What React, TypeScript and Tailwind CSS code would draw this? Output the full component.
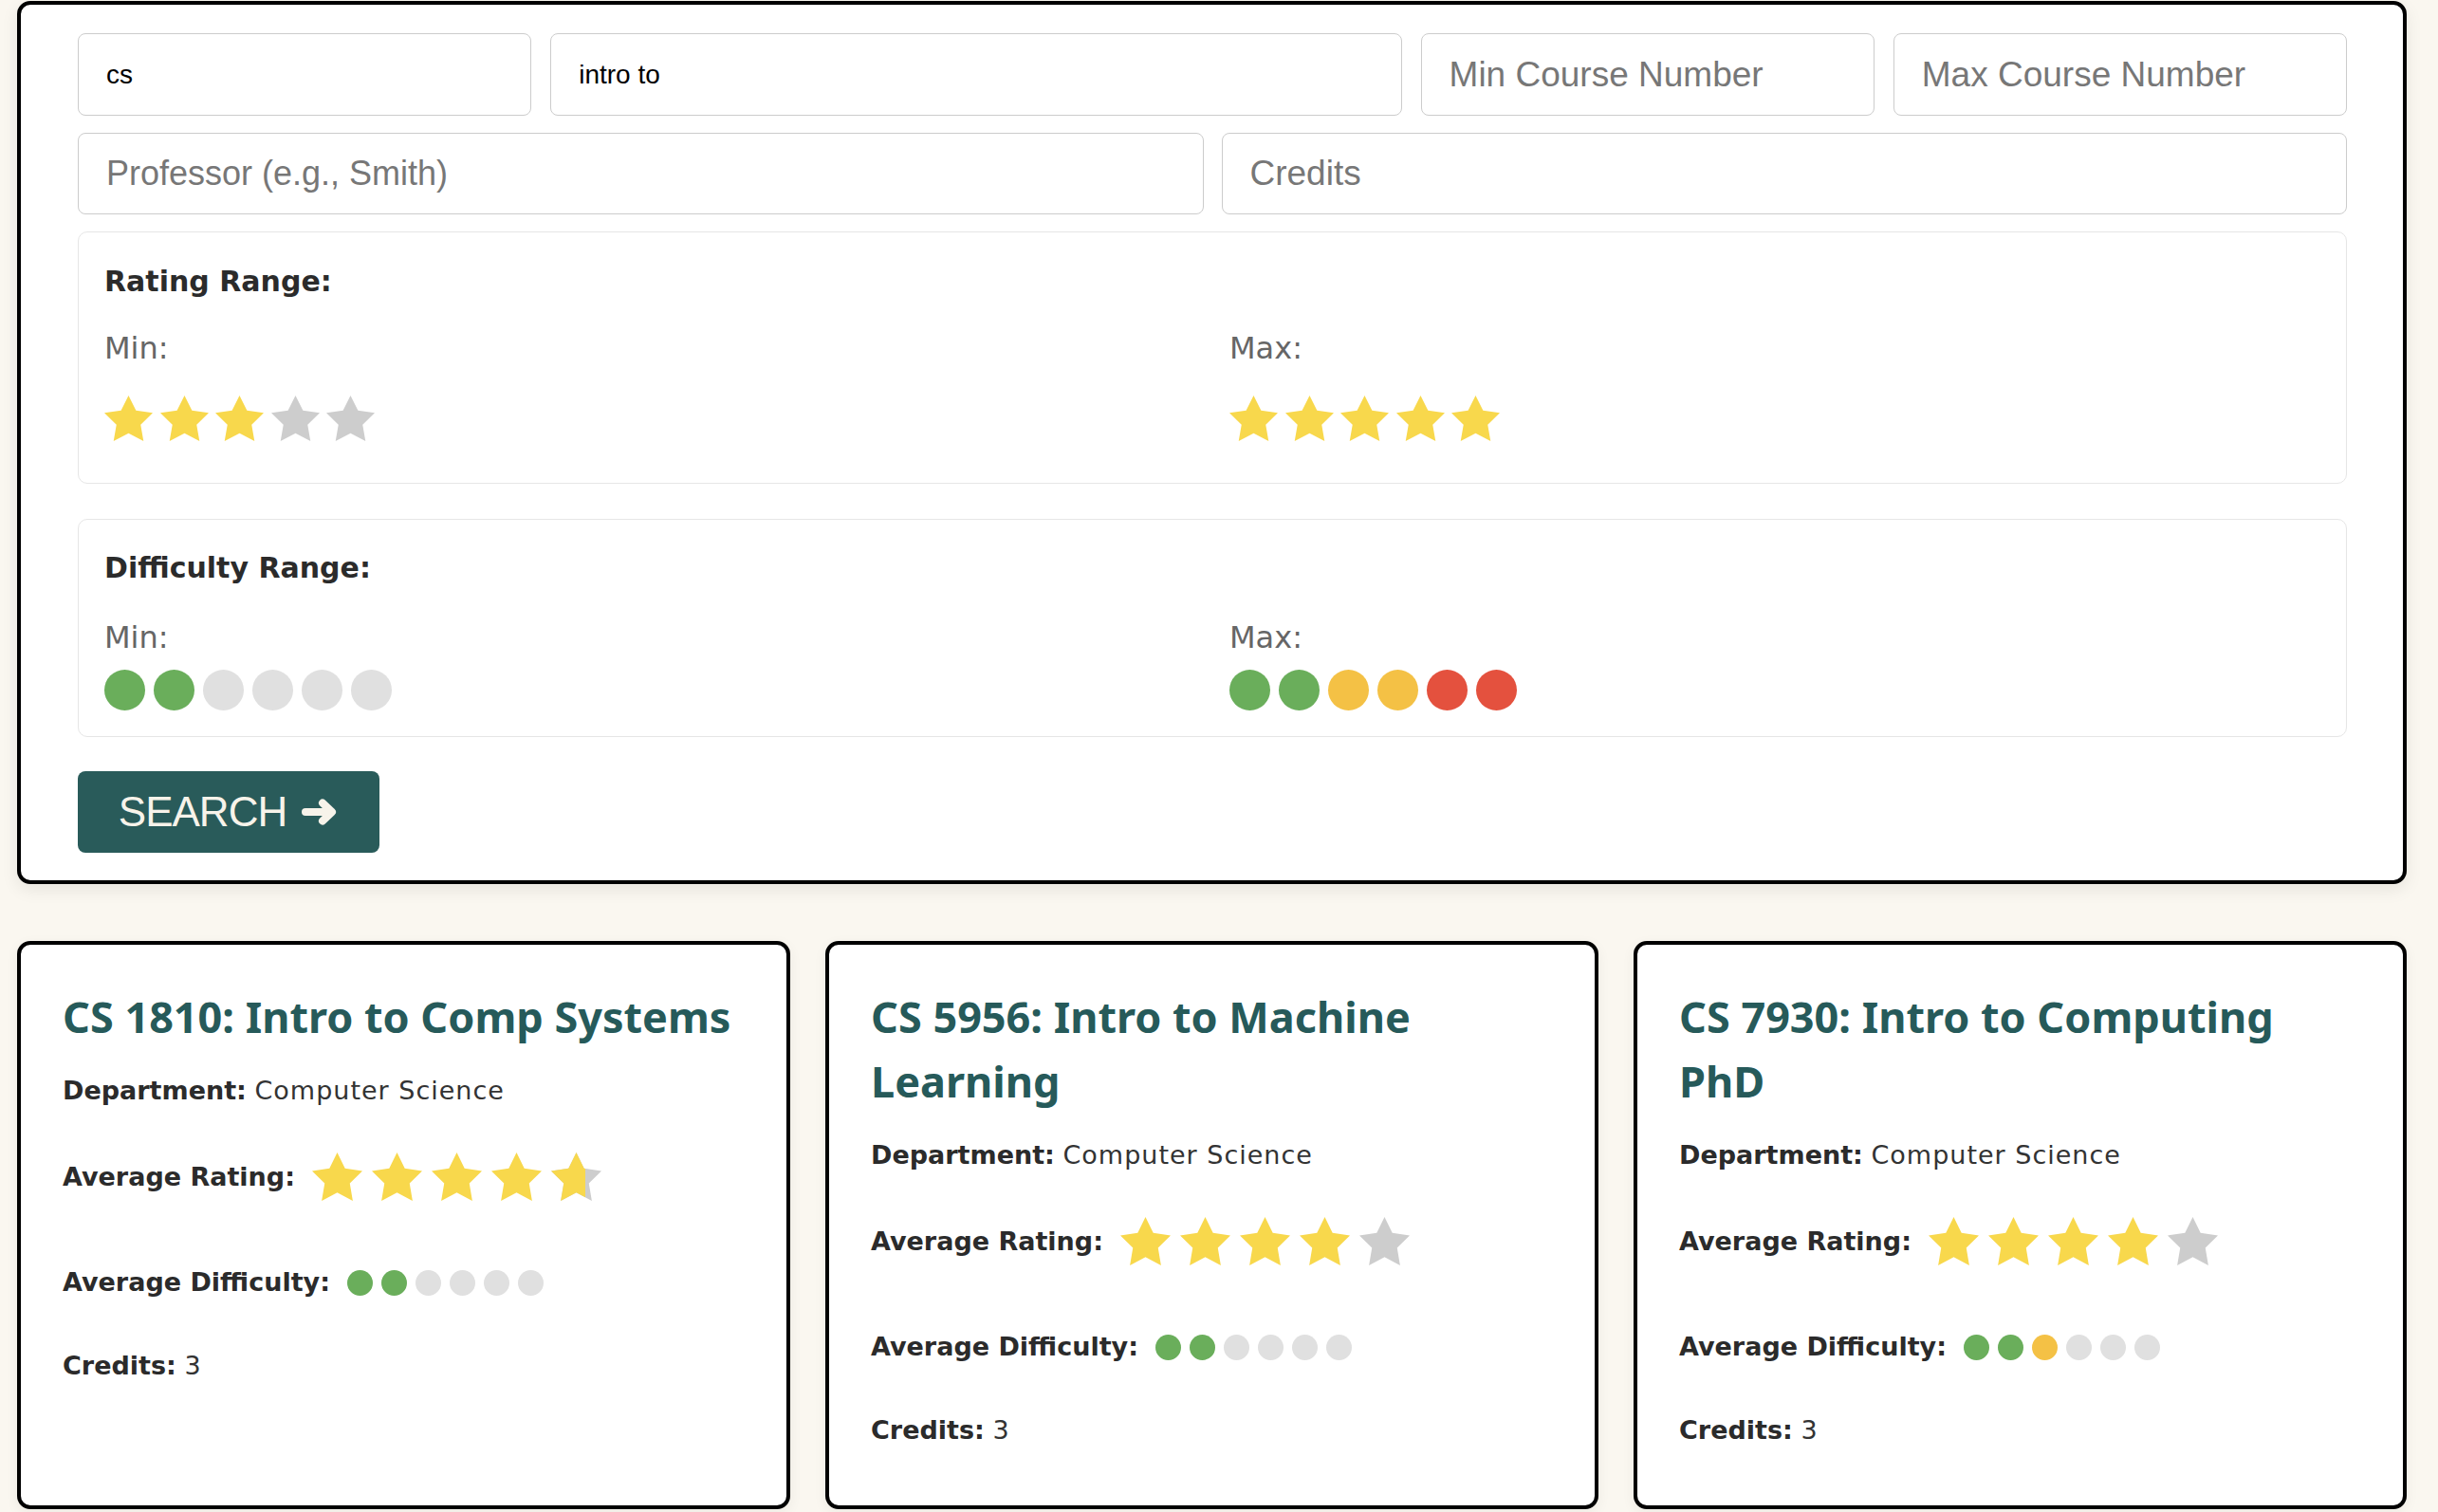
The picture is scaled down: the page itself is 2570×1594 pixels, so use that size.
import React from "react";

const YELLOW = "#f8d84c";
const GRAY_STAR = "#cdcdcd";
const GREEN = "#6aae5b";
const AMBER = "#f4c145";
const RED = "#e4513e";
const GRAY_DOT = "#e0e0e0";

function Star({ w, h, color }: { w: number; h: number; color: string }) {
  return (
    <svg
      width={w}
      height={h}
      viewBox="2 2 20 19.02"
      preserveAspectRatio="none"
      className="block shrink-0 max-w-none"
    >
      <polygon
        points="12,2 15.09,8.26 22,9.27 17,14.14 18.18,21.02 12,17.77 5.82,21.02 7,14.14 2,9.27 8.91,8.26"
        fill={color}
      />
    </svg>
  );
}

function PanelStars({ filled }: { filled: number }) {
  return (
    <div className="flex gap-x-[7.6px] mt-[32px]">
      {[0, 1, 2, 3, 4].map((i) => (
        <Star key={i} w={51} h={48} color={i < filled ? YELLOW : GRAY_STAR} />
      ))}
    </div>
  );
}

function PanelDots({ colors }: { colors: string[] }) {
  return (
    <div className="flex gap-x-[9px] mt-[16px]">
      {colors.map((c, i) => (
        <span key={i} className="block w-[43px] h-[43px] rounded-full" style={{ backgroundColor: c }} />
      ))}
    </div>
  );
}

function CardStars({ rating }: { rating: number }) {
  return (
    <div className="flex gap-x-[10px] ml-[18px]">
      {[0, 1, 2, 3, 4].map((i) => {
        const frac = Math.max(0, Math.min(1, rating - i));
        if (frac >= 1) return <Star key={i} w={53} h={51} color={YELLOW} />;
        if (frac <= 0) return <Star key={i} w={53} h={51} color={GRAY_STAR} />;
        return (
          <div key={i} className="relative w-[53px] h-[51px] shrink-0">
            <Star w={53} h={51} color={GRAY_STAR} />
            <div className="absolute left-0 top-0 h-full overflow-hidden" style={{ width: `${frac * 100}%` }}>
              <Star w={53} h={51} color={YELLOW} />
            </div>
          </div>
        );
      })}
    </div>
  );
}

function CardDots({ colors }: { colors: string[] }) {
  return (
    <div className="flex gap-x-[9px] ml-[18px]">
      {colors.map((c, i) => (
        <span key={i} className="block w-[27px] h-[27px] rounded-full" style={{ backgroundColor: c }} />
      ))}
    </div>
  );
}

type Course = {
  title: string;
  dept: string;
  rating: number;
  dots: string[];
  credits: string;
};

const courses: Course[] = [
  {
    title: "CS 1810: Intro to Comp Systems",
    dept: "Computer Science",
    rating: 4.68,
    dots: [GREEN, GREEN, GRAY_DOT, GRAY_DOT, GRAY_DOT, GRAY_DOT],
    credits: "3",
  },
  {
    title: "CS 5956: Intro to Machine Learning",
    dept: "Computer Science",
    rating: 4,
    dots: [GREEN, GREEN, GRAY_DOT, GRAY_DOT, GRAY_DOT, GRAY_DOT],
    credits: "3",
  },
  {
    title: "CS 7930: Intro to Computing PhD",
    dept: "Computer Science",
    rating: 4,
    dots: [GREEN, GREEN, AMBER, GRAY_DOT, GRAY_DOT, GRAY_DOT],
    credits: "3",
  },
];

function CourseCard({ c }: { c: Course }) {
  return (
    <div className="bg-white border-[4px] border-black rounded-[14px] pl-[44px] pr-[44px] pt-[42px] pb-[59px] shadow-[0_4px_14px_rgba(0,0,0,0.06)]">
      <h2 className="font-['Noto_Sans',sans-serif] font-bold text-[45px] leading-[68px] text-[#265a5a]">
        {c.title}
      </h2>
      <p className="mt-[24px] text-[27px] leading-[40px] text-[#333333]">
        <span className="font-bold text-[#2b2b2b]">Department:</span>{" "}
        <span className="tracking-[1px]">{c.dept}</span>
      </p>
      <div className="mt-[45px] flex items-center h-[51px]">
        <span className="font-bold text-[27px] leading-[40px] text-[#2b2b2b]">Average Rating:</span>
        <CardStars rating={c.rating} />
      </div>
      <div className="mt-[66px] flex items-center h-[40px]">
        <span className="font-bold text-[27px] leading-[40px] text-[#2b2b2b]">Average Difficulty:</span>
        <CardDots colors={c.dots} />
      </div>
      <p className="mt-[48px] text-[27px] leading-[40px] text-[#333333]">
        <span className="font-bold text-[#2b2b2b]">Credits:</span> {c.credits}
      </p>
    </div>
  );
}

function ArrowIcon() {
  return (
    <svg width="40" height="30" viewBox="0 0 40 30" className="block">
      <path d="M5 15 H30" stroke="#f7f3ea" strokeWidth="8" strokeLinecap="round" fill="none" />
      <path
        d="M23 5.5 L33 15 L23 24.5"
        stroke="#f7f3ea"
        strokeWidth="8"
        strokeLinecap="round"
        strokeLinejoin="round"
        fill="none"
      />
    </svg>
  );
}

const inputBase =
  "block w-full bg-white border border-[#cccccc] rounded-[8px] px-[29px] outline-none font-['Liberation_Sans',Arial,sans-serif] placeholder:text-[#777777]";

export default function App() {
  return (
    <div className="min-h-screen bg-[#faf7f0] pt-[1px] pb-[40px] font-['DejaVu_Sans',sans-serif]">
      <div className="ml-[18px] w-[2519px]">
        <section className="bg-white border-[4px] border-black rounded-[14px] pt-[30px] pl-[60px] pr-[59px] pb-[29px] shadow-[0_6px_18px_rgba(0,0,0,0.08)]">
          <div className="grid grid-cols-[478fr_897fr_478fr_478fr] gap-x-[20px]">
            <input className={`${inputBase} h-[87px] text-[28px] text-black`} defaultValue="cs" />
            <input className={`${inputBase} h-[87px] text-[28px] text-black`} defaultValue="intro to" />
            <input className={`${inputBase} h-[87px] text-[37px]`} placeholder="Min Course Number" />
            <input className={`${inputBase} h-[87px] text-[37px]`} placeholder="Max Course Number" />
          </div>
          <div className="mt-[18px] grid grid-cols-2 gap-x-[19px]">
            <input className={`${inputBase} h-[86px] text-[36px]`} placeholder="Professor (e.g., Smith)" />
            <input className={`${inputBase} h-[86px] text-[37px]`} placeholder="Credits" />
          </div>

          <div className="mt-[18px] border border-[#e6e6e6] rounded-[10px] pl-[27px] pr-[27px] pt-[34px] pb-[44px]">
            <h3 className="font-bold text-[30px] leading-[36px] text-[#2b2b2b]">Rating Range:</h3>
            <div className="mt-[34px] grid grid-cols-2 gap-x-[36px]">
              <div>
                <div className="text-[32px] leading-[36px] text-[#666666]">Min:</div>
                <PanelStars filled={3} />
              </div>
              <div>
                <div className="text-[32px] leading-[36px] text-[#666666]">Max:</div>
                <PanelStars filled={5} />
              </div>
            </div>
          </div>

          <div className="mt-[37px] border border-[#e6e6e6] rounded-[10px] pl-[27px] pr-[27px] pt-[33px] pb-[27px]">
            <h3 className="font-bold text-[30px] leading-[36px] text-[#2b2b2b]">Difficulty Range:</h3>
            <div className="mt-[37px] grid grid-cols-2 gap-x-[36px]">
              <div>
                <div className="text-[32px] leading-[36px] text-[#666666]">Min:</div>
                <PanelDots colors={[GREEN, GREEN, GRAY_DOT, GRAY_DOT, GRAY_DOT, GRAY_DOT]} />
              </div>
              <div>
                <div className="text-[32px] leading-[36px] text-[#666666]">Max:</div>
                <PanelDots colors={[GREEN, GREEN, AMBER, AMBER, RED, RED]} />
              </div>
            </div>
          </div>

          <button className="mt-[36px] flex items-center justify-center gap-x-[15px] w-[318px] h-[86px] rounded-[8px] bg-[#295b5a] text-[#f7f3ea] font-['Liberation_Sans',Arial,sans-serif] text-[44px] tracking-[-1px]">
            <span>SEARCH</span>
            <ArrowIcon />
          </button>
        </section>

        <div className="mt-[60px] grid grid-cols-3 gap-x-[37px]">
          {courses.map((c) => (
            <CourseCard key={c.title} c={c} />
          ))}
        </div>
      </div>
    </div>
  );
}
